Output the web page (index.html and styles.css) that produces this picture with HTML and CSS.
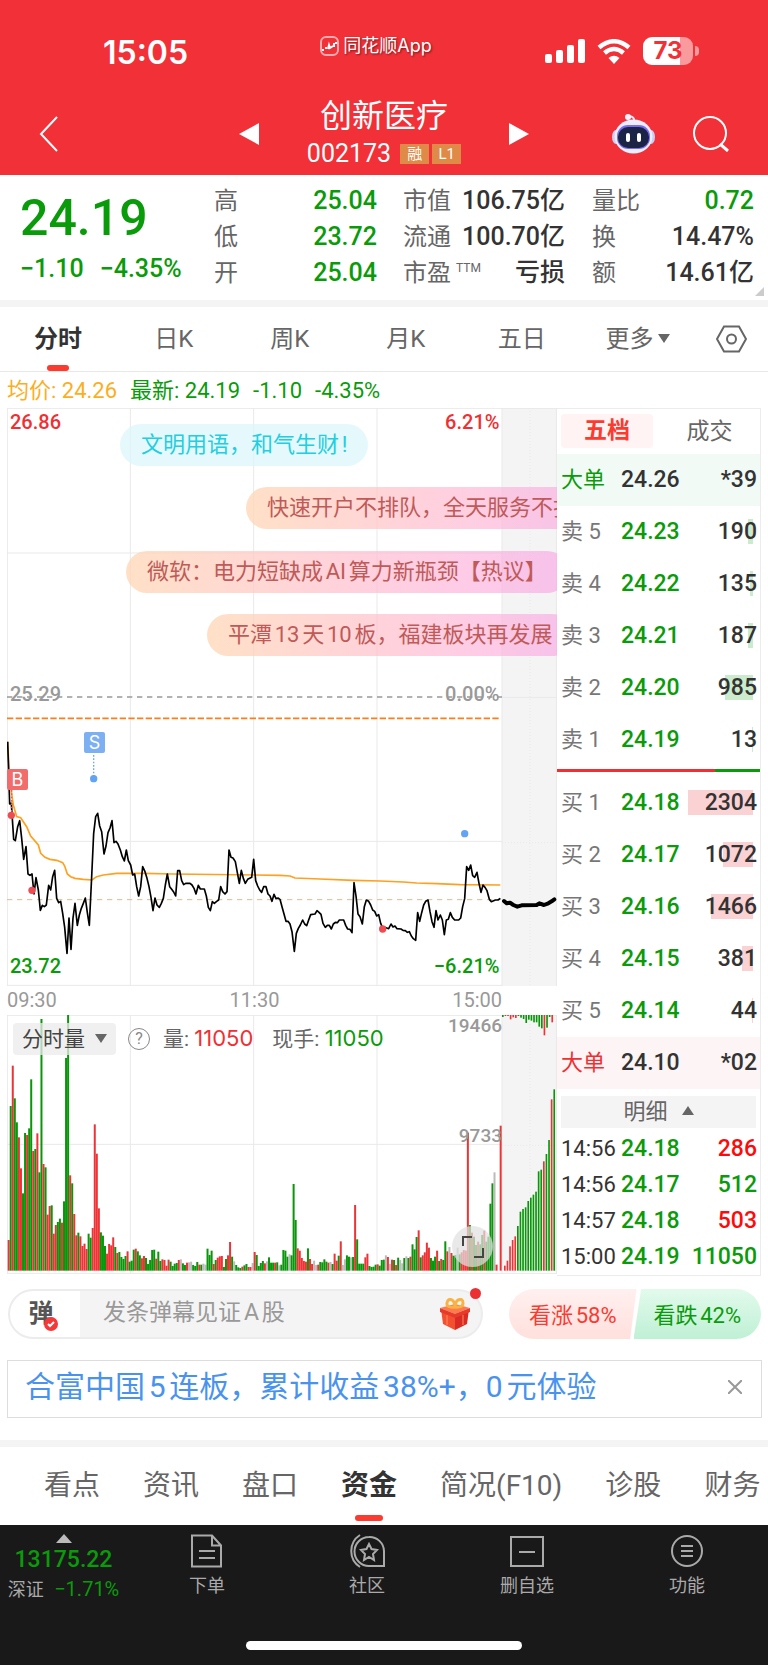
FILE: index.html
```
<!DOCTYPE html>
<html lang="zh-CN">
<head>
  <meta charset="UTF-8">
  <meta name="viewport" content="width=device-width, initial-scale=1.0">
  <title>创新医疗 002173</title>
  <link rel="stylesheet" href="styles.css">
</head>
<body>
  <header>
    <div class="status">
      <span class="clock">15:05</span>
      <span class="app-name">
        <svg width="19" height="20" viewBox="0 0 19 20"><rect x="1" y="1" width="17" height="18" rx="5" fill="none" stroke="#fff" stroke-opacity=".6" stroke-width="2"/><path d="M2 14h2M5 12h2M8 13l1-4 1 3 3-2M14 7v4M16 6v2" fill="none" stroke="#fff" stroke-width="2"/></svg>
        同花顺App
      </span>
      <span class="signals">
        <svg width="40" height="24" viewBox="0 0 40 24" fill="#fff"><rect y="15" width="7" height="9" rx="2"/><rect x="11" y="11" width="7" height="13" rx="2"/><rect x="22" y="6" width="7" height="18" rx="2"/><rect x="33" width="7" height="24" rx="2"/></svg>
        <svg width="34" height="25" viewBox="0 0 34 25"><path d="M2 8.500Q17-4 32 8.500M7.500 14Q17 6 26.500 14" fill="none" stroke="#fff" stroke-width="4.500"/><path d="M11.500 19Q17 14.500 22.500 19L17 25z" fill="#fff"/></svg>
        <span class="battery">73</span>
      </span>
    </div>
    <div class="title-bar">
      <button class="icon-btn back" aria-label="返回"><svg width="20" height="36" viewBox="0 0 20 36"><path d="M18 1L2 18l16 17" fill="none" stroke="#fff" stroke-width="2"/></svg></button>
      <div class="stock">
        <button class="icon-btn" aria-label="上一只"><svg width="20" height="22" viewBox="0 0 20 22"><path d="M20 0v22L0 11z" fill="#fff"/></svg></button>
        <div class="stock-name">
          <h1>创新医疗</h1>
          <div class="code">002173 <span class="badge">融</span><span class="badge">L1</span></div>
        </div>
        <button class="icon-btn" aria-label="下一只"><svg width="20" height="22" viewBox="0 0 20 22"><path d="M0 0v22l20-11z" fill="#fff"/></svg></button>
      </div>
      <div class="actions">
        <button class="icon-btn" aria-label="智能助手">
          <svg width="43" height="40" viewBox="0 0 43 40">
            <path d="M22 7q1-4-5-5" fill="none" stroke="#e4e6fb" stroke-width="2"/><circle cx="16" cy="3" r="3" fill="#f3f3ff"/>
            <ellipse cx="4" cy="23" rx="4" ry="7" fill="#c9cef2"/><ellipse cx="39" cy="23" rx="4" ry="7" fill="#c9cef2"/>
            <ellipse cx="21.500" cy="22.500" rx="19" ry="17" fill="#eceefd"/>
            <rect x="5" y="11" width="33" height="24" rx="11" fill="#7c6df0"/>
            <rect x="6" y="13" width="31" height="21" rx="10" fill="#1b2444"/>
            <rect x="14" y="19" width="4" height="9" rx="2" fill="#fff"/><rect x="25" y="19" width="4" height="9" rx="2" fill="#fff"/>
          </svg>
        </button>
        <button class="icon-btn" aria-label="搜索"><svg width="36" height="36" viewBox="0 0 36 36" fill="none" stroke="#fff" stroke-width="2"><circle cx="17" cy="17" r="16"/><path d="M27 28l8 7" stroke-width="3"/></svg></button>
      </div>
    </div>
  </header>

  <section class="quote">
    <div class="price-now">
      <strong>24.19</strong>
      <div><span>−1.10</span><span>−4.35%</span></div>
    </div>
    <dl class="col-a">
      <div><dt>高</dt><dd class="green">25.04</dd></div>
      <div><dt>低</dt><dd class="green">23.72</dd></div>
      <div><dt>开</dt><dd class="green">25.04</dd></div>
    </dl>
    <dl class="col-b">
      <div><dt>市值</dt><dd>106.75亿</dd></div>
      <div><dt>流通</dt><dd>100.70亿</dd></div>
      <div><dt>市盈<sup>TTM</sup></dt><dd>亏损</dd></div>
    </dl>
    <dl class="col-c">
      <div><dt>量比</dt><dd class="green">0.72</dd></div>
      <div><dt>换</dt><dd>14.47%</dd></div>
      <div><dt>额</dt><dd>14.61亿</dd></div>
    </dl>
    <i class="corner"></i>
  </section>

  <nav class="period">
    <a href="#" class="active">分时</a>
    <a href="#">日K</a>
    <a href="#">周K</a>
    <a href="#">月K</a>
    <a href="#">五日</a>
    <a href="#">更多<i class="down"></i></a>
    <button class="icon-btn" aria-label="设置"><svg width="31" height="28" viewBox="0 0 31 28" fill="none" stroke="#666" stroke-width="2"><path d="M8 1.500h15L30 14l-7 12.500H8L1 14z"/><circle cx="15.500" cy="14" r="4.500"/></svg></button>
  </nav>

  <p class="latest"><span class="avg">均价: 24.26</span><span>最新: 24.19</span><span>-1.10</span><span>-4.35%</span></p>

  <main class="market">
    <div class="charts">
      <div class="price-chart">
        <svg class="plot" viewBox="0 0 1650 1734" preserveAspectRatio="none">
          <rect x="1485" y="0" width="165" height="1734" fill="#f4f4f4"/>
          <path class="grid" d="M1 0V1734M370 0V1734M740 0V1734M1110 0V1734M1485 0V1734M1648 0V1734M0 1H1650M0 435H1485M0 1300H1485M0 1732H1485M1485 868H1650"/>
          <path class="grid dotted" d="M1569 0V1734M1485 435H1650M1485 1304H1650"/>
          <path d="M0 867H1485" stroke="#999" stroke-width="4" stroke-dasharray="16 14"/>
          <path d="M0 931H1480" stroke="#ff7d1a" stroke-width="5" stroke-dasharray="19 7"/>
          <path d="M0 1475H1480" stroke="#e0bb90" stroke-width="3" stroke-dasharray="16 14"/>
          <g transform="translate(-21 846)">
            <polyline class="avg-line" points="23,155 29,270 40,345 50,380 62,383 80,410 92,438 115,465 122,490 135,502 150,508 170,511 188,518 194,528 202,552 212,560 225,565 250,568 276,570 290,560 310,555 350,550 430,550 520,552 840,556"/>
            <polyline class="price-line" points="23,155 29,342 34,340 41,448 46,452 53,410 59,392 65,445 71,508 78,470 84,552 90,556 96,552 102,612 108,563 115,600 121,661 127,646 133,650 139,645 146,586 152,600 158,560 164,541 170,625 176,638 182,634 188,670 194,712 201,790 207,684 213,778 219,684 225,640 232,706 238,675 244,655 250,640 256,624 262,668 268,706 275,560 281,430 287,380 293,370 299,408 305,425 312,492 318,468 324,428 330,414 336,392 342,458 348,454 354,462 361,480 367,500 373,513 379,480 385,512 392,525 398,555 404,552 410,590 416,618 422,590 428,530 435,545 441,565 447,590 453,622 459,662 465,624 471,645 478,652 484,640 490,625 496,585 502,552 509,590 515,598 521,606 527,618 533,542 539,542 545,572 551,584 557,580 570,580 576,585 582,595 588,612 595,586 601,597 613,597 619,618 625,652 631,662 637,635 643,640 650,634 656,630 662,590 668,605 675,612 681,605 687,480 693,502 699,504 706,515 712,548 718,580 724,541 730,565 736,580 743,568 755,562 761,508 767,572 773,588 779,600 785,607 791,590 798,590 804,612 810,618 816,634 822,613 828,626 834,624 840,628"/>
            <path d="M281 195V266" stroke="#6fa8f2" stroke-width="4" stroke-dasharray="5 5"/>
            <path d="M35 300V376" stroke="#f05a5a" stroke-width="4" stroke-dasharray="5 5"/>
            <circle cx="281" cy="266" r="11" fill="#62a3f3"/>
            <circle cx="34" cy="376" r="11" fill="#ee4b52"/>
            <circle cx="96" cy="601" r="11" fill="#ee4b52"/>
          </g>
          <g transform="translate(789 846)">
            <polyline class="avg-line" points="30,556 60,558 75,564 150,567 250,571 330,573 400,576 440,579 500,581 570,584 691,585"/>
            <polyline class="price-line" points="30,628 36,650 42,672 48,694 54,694 60,702 66,725 73,784 79,730 85,715 91,705 98,690 104,702 110,707 116,690 122,674 135,672 141,662 147,667 153,673 159,700 166,712 172,706 178,706 184,717 190,702 196,697 202,698 208,690 221,690 227,706 233,717 240,718 246,728 252,578 258,618 264,672 270,680 277,702 283,650 289,630 296,634 302,645 308,660 314,664 320,678 326,674 332,700 338,714 344,712 356,716 363,702 369,711 375,708 381,716 393,717 399,721 406,722 412,727 418,725 424,738 430,746 437,751 443,668 449,694 455,668 461,645 467,634 474,630 480,665 486,695 492,712 498,662 504,690 511,675 517,690 523,734 529,690 535,688 541,668 547,682 554,690 566,690 572,684 578,650 584,626 590,530 596,541 602,525 608,557 614,562 621,547 627,580 633,607 639,585 645,592 651,602 658,628 664,635 676,630 684,630 691,625"/>
            <polyline class="price-line auction" points="702,633 710,640 720,638 730,645 742,650 755,646 800,645 808,640 822,645 835,640 845,634 853,628"/>
            <circle cx="338" cy="717" r="11" fill="#ee4b52"/>
            <circle cx="584" cy="431" r="11" fill="#62a3f3"/>
          </g>
        </svg>
        <span class="mark sell">S</span>
        <span class="mark buy">B</span>
        <div class="axis top red"><span>26.86</span><span>6.21%</span></div>
        <div class="axis middle"><span>25.29</span><span>0.00%</span></div>
        <div class="axis bottom green"><span>23.72</span><span>−6.21%</span></div>
        <span class="bullet b1">文明用语，和气生财!</span>
        <span class="bullet b2">快速开户不排队，全天服务不打</span>
        <span class="bullet b3">微软：电力短缺成AI算力新瓶颈【热议】</span>
        <span class="bullet b4">平潭13天10板，福建板块再发展</span>
      </div>
      <div class="times"><span>09:30</span><span>11:30</span><span>15:00</span></div>
      <div class="volume-chart">
        <svg class="plot" viewBox="0 0 1650 777" preserveAspectRatio="none">
          <rect x="1485" y="0" width="165" height="768" fill="#f4f4f4"/>
          <path class="grid" d="M1 0V777M370 0V777M740 0V777M1110 0V777M1485 0V777M1648 0V777M0 1H1650M0 388H1485M0 775H1650"/>
          <path class="grid dotted" d="M1569 0V766M1485 391H1650"/>
          <g id="volume"></g>
          <g id="auction"></g>
        </svg>
        <div class="volume-head">
          <button class="picker">分时量<i class="down"></i></button>
          <button class="help" aria-label="说明">?</button>
          <span>量: <b class="red">11050</b></span>
          <span>现手: <b class="green">11050</b></span>
        </div>
        <span class="scale max">19466</span>
        <span class="scale half">9733</span>
        <button class="expand" aria-label="放大"><svg width="22" height="22" viewBox="0 0 22 22" fill="none" stroke="#444" stroke-width="2"><path d="M1 10V1h9M21 12v9h-9"/></svg></button>
      </div>
    </div>

    <aside class="book">
      <div class="book-tabs"><button class="active">五档</button><button>成交</button></div>
      <table>
        <tr class="big-sell"><th>大单</th><td>24.26</td><td>*39</td></tr>
        <tr><th>卖 5</th><td class="green">24.23</td><td><i class="bar" style="width:5px"></i>190</td></tr>
        <tr><th>卖 4</th><td class="green">24.22</td><td><i class="bar" style="width:3px"></i>135</td></tr>
        <tr><th>卖 3</th><td class="green">24.21</td><td><i class="bar" style="width:5px"></i>187</td></tr>
        <tr><th>卖 2</th><td class="green">24.20</td><td><i class="bar" style="width:28px"></i>985</td></tr>
        <tr><th>卖 1</th><td class="green">24.19</td><td><i class="bar" style="width:1px"></i>13</td></tr>
      </table>
      <div class="ratio"><i style="width:78%"></i></div>
      <table class="bids">
        <tr><th>买 1</th><td class="green">24.18</td><td><i class="bar" style="width:65px"></i>2304</td></tr>
        <tr><th>买 2</th><td class="green">24.17</td><td><i class="bar" style="width:30px"></i>1072</td></tr>
        <tr><th>买 3</th><td class="green">24.16</td><td><i class="bar" style="width:42px"></i>1466</td></tr>
        <tr><th>买 4</th><td class="green">24.15</td><td><i class="bar" style="width:11px"></i>381</td></tr>
        <tr><th>买 5</th><td class="green">24.14</td><td><i class="bar" style="width:1px"></i>44</td></tr>
        <tr class="big-buy"><th>大单</th><td>24.10</td><td>*02</td></tr>
      </table>
      <button class="detail">明细<i class="up"></i></button>
      <table class="ticks">
        <tr><th>14:56</th><td class="green">24.18</td><td class="up-tick">286</td></tr>
        <tr><th>14:56</th><td class="green">24.17</td><td class="green">512</td></tr>
        <tr><th>14:57</th><td class="green">24.18</td><td class="up-tick">503</td></tr>
        <tr><th>15:00</th><td class="green">24.19</td><td class="green">11050</td></tr>
      </table>
    </aside>
  </main>

  <section class="talk">
    <div class="send">
      <button class="toggle" aria-label="弹幕开关">弹<svg width="14" height="14" viewBox="0 0 14 14"><circle cx="7" cy="7" r="7" fill="#f5383a"/><path d="M4 7l2 2 4-4" fill="none" stroke="#fff" stroke-width="2"/></svg></button>
      <input type="text" aria-label="发条弹幕" placeholder="发条弹幕见证A股">
      <button class="icon-btn gift" aria-label="礼物">
        <svg width="30" height="32" viewBox="0 0 30 32">
          <path d="M1 11l14 5v16L3 26z" fill="#f2502f"/><path d="M29 11l-14 5v16l12-6z" fill="#d92a24"/>
          <path d="M0 10l15-4 15 4-15 6z" fill="#ff7a4e"/><path d="M0 10l15 6 15-6v4l-15 6L0 14z" fill="#e63b2a"/>
          <path d="M15 9q-9 1-8-4t5-3q3 2 3 7q0-5 3-7q5-2 5 3t-8 4z" fill="none" stroke="#f8b343" stroke-width="3"/>
          <path d="M7 17v10M23 17v10" stroke="#ff8b5e" stroke-width="1"/>
        </svg>
      </button>
      <i class="dot"></i>
    </div>
    <div class="vote">
      <button class="rise">看涨58%</button>
      <button class="fall">看跌42%</button>
    </div>
  </section>

  <div class="promo">
    <a href="#">合富中国5连板，累计收益38%+，0元体验</a>
    <button class="icon-btn" aria-label="关闭"><svg width="14" height="14" viewBox="0 0 14 14"><path d="M0 0l14 14M14 0L0 14" stroke="#999" stroke-width="2"/></svg></button>
  </div>

  <nav class="sections">
    <a href="#">看点</a>
    <a href="#">资讯</a>
    <a href="#">盘口</a>
    <a href="#" class="active">资金</a>
    <a href="#">简况(F10)</a>
    <a href="#">诊股</a>
    <a href="#">财务</a>
  </nav>

  <footer>
    <div class="toolbar">
      <a href="#" class="index"><i class="up"></i><b>13175.22</b><span>深证 <em>−1.71%</em></span></a>
      <a href="#"><svg width="34" height="34" viewBox="0 0 34 34"><path d="M2 1.500h20l9 10v21H2zM22 1.500v10h9M9 17h16M9 24h16"/></svg>下单</a>
      <a href="#"><svg width="36" height="34" viewBox="0 0 36 34"><path d="M20 3a14.500 14.500 0 1 0 0 29h15V17A14.500 14.500 0 0 0 20 3zM11 1a19 19 0 0 0 0 32M20 10l2.500 5 5.500 1-4 4 1 6-5-3-5 3 1-6-4-4 5.500-1z"/></svg>社区</a>
      <a href="#"><svg width="34" height="34" viewBox="0 0 34 34"><path d="M1 3h32v29H1zM9 18h16"/></svg>删自选</a>
      <a href="#"><svg width="34" height="34" viewBox="0 0 34 34"><circle cx="17" cy="17" r="15"/><path d="M11 12h12M11 17h12M11 22h12"/></svg>功能</a>
    </div>
    <div class="home"></div>
  </footer>
  <script src="script.js"></script>
</body>
</html>
```
FILE: styles.css
```
* {
  box-sizing: border-box;
}
body {
  font-family: Roboto, 'Noto Sans CJK SC', sans-serif;
  margin: 0;
  background: #fff;
  color: #333;
  text-autospace: no-autospace;
  overflow-x: hidden;
}
button {
  font-family: inherit;
  border: none;
  background: none;
  padding: 0;
  color: inherit;
}
a {
  color: inherit;
  text-decoration: none;
}
svg {
  display: block;
}
.green {
  color: #0a9b0a;
}
.red {
  color: #f12f33;
}
.up, .down {
  display: inline-block;
  border: 6px solid transparent;
}
.down {
  border-top: 9px solid #666;
  border-bottom: none;
}
.up {
  border-bottom: 9px solid #666;
  border-top: none;
}

/* header */
header {
  background: #f23038;
  color: #fff;
  height: 175px;
}
.status {
  height: 93px;
  padding: 12px 69px 0 103px;
  display: grid;
  grid-template-columns: 1fr auto 1fr;
  align-items: center;
}
.clock {
  font-family: Inter, sans-serif;
  font-size: 32px;
  font-weight: 600;
}
.app-name {
  display: flex;
  align-items: center;
  gap: 4px;
  font-size: 18px;
  line-height: 20px;
  padding-bottom: 14px;
  margin-right: 50px;
  text-shadow: 1px 1px 2px rgba(0,0,0,0.5);
  font-family: Inter, 'Noto Sans CJK SC', sans-serif;
}
.signals {
  display: flex;
  justify-content: flex-end;
  align-items: center;
  gap: 12px;
  padding-bottom: 3px;
}
.battery {
  position: relative;
  width: 50px;
  height: 28px;
  border-radius: 9px;
  background: linear-gradient(90deg, #fff 73%, #f99a9d 73%);
  color: #f23038;
  font: 700 24px/28px Inter, sans-serif;
  text-align: center;
  margin-right: 6px;
}
.battery::after {
  content: '';
  position: absolute;
  right: -6px;
  top: 9px;
  width: 4px;
  height: 10px;
  border-radius: 0 4px 4px 0;
  background: #f99a9d;
}
.title-bar {
  height: 82px;
  padding: 0 39px;
  display: grid;
  grid-template-columns: 1fr 290px 1fr;
  align-items: center;
}
.stock {
  display: flex;
  justify-content: space-between;
  align-items: center;
}
.stock-name {
  text-align: center;
}
.stock-name h1 {
  font-size: 32px;
  font-weight: 400;
  line-height: 40px;
  margin: 0;
}
.code {
  display: flex;
  align-items: center;
  gap: 3px;
  font-size: 25px;
  line-height: 36px;
}
.badge {
  width: 29px;
  height: 20px;
  background: #e08a48;
  font-size: 15px;
  line-height: 20px;
}
.code .badge:first-of-type {
  margin-left: 6px;
}
.actions {
  display: flex;
  justify-content: flex-end;
  align-items: center;
  gap: 38px;
}

/* quote */
.quote {
  position: relative;
  height: 125px;
  padding: 8px 14px 0 20px;
  display: flex;
  font-size: 25px;
  font-weight: 500;
}
.price-now {
  width: 194px;
  color: #0a9b0a;
}
.price-now strong {
  display: block;
  font-size: 50px;
  font-weight: 500;
  line-height: 70px;
}
.price-now div {
  display: flex;
  gap: 16px;
  line-height: 32px;
}
.quote dl {
  margin: 0;
}
.quote dl div {
  display: flex;
  justify-content: space-between;
  line-height: 36px;
}
.quote dt {
  font-size: 24px;
  font-weight: 400;
  color: #666;
  white-space: nowrap;
}
.quote dd {
  margin: 0;
  white-space: nowrap;
}
.quote sup {
  font-size: 12px;
  line-height: 12px;
  margin-left: 5px;
}
.col-a {
  width: 163px;
}
.quote .col-b {
  width: 162px;
  margin: 0 27px 0 26px;
}
.col-c {
  flex: 1;
}
.corner {
  position: absolute;
  right: 4px;
  bottom: 4px;
  border-left: 9px solid transparent;
  border-bottom: 9px solid #ccc;
}

/* period tabs */
.period {
  border-top: 7px solid #f4f4f4;
  border-bottom: 1px solid #e8e8e8;
  height: 72px;
  display: grid;
  grid-template-columns: repeat(6, 8fr) 5fr;
  justify-items: center;
  align-items: center;
  font-size: 24px;
  line-height: 64px;
  color: #666;
}
.active {
  position: relative;
  font-weight: 700;
  color: #333;
}
.period .active::after, .sections .active::after {
  content: '';
  position: absolute;
  left: calc(50% - 11px);
  bottom: 0;
  width: 22px;
  height: 6px;
  border-radius: 3px;
  background: #fb3a30;
}
.period .down {
  margin: 0 0 4px 4px;
}
.latest {
  margin: 0;
  padding: 0 7px;
  height: 36px;
  display: flex;
  gap: 13px;
  font-size: 22px;
  line-height: 38px;
  color: #0a9b0a;
}
.latest .avg {
  color: #fcae1e;
}

/* charts */
.market {
  display: flex;
  margin: 0 7px;
}
.charts {
  flex: 1;
  min-width: 0;
}
.plot {
  width: 100%;
  height: 100%;
}
.plot path, .plot polyline {
  fill: none;
}
.grid {
  stroke: #e9e9e9;
  stroke-width: 3;
}
.dotted {
  stroke-dasharray: 3 6;
}
.price-line {
  stroke: #000;
  stroke-width: 5;
  stroke-linejoin: round;
}
.plot .auction {
  stroke-width: 12;
  stroke-linecap: round;
}
.avg-line {
  stroke: #ffa01e;
  stroke-width: 5;
}
.price-chart {
  position: relative;
  height: 578px;
  overflow: hidden;
}
.axis {
  position: absolute;
  left: 3px;
  width: 89%;
  display: flex;
  justify-content: space-between;
  font-size: 20px;
  font-weight: 500;
  line-height: 24px;
}
.axis.top {
  top: 2px;
}
.axis.middle {
  top: 274px;
  color: #999;
}
.axis.bottom {
  bottom: 8px;
}
.mark {
  position: absolute;
  width: 21px;
  height: 21px;
  border-radius: 2px;
  color: #fff;
  font: 18px/21px Inter, sans-serif;
  text-align: center;
}
.sell {
  left: 14%;
  top: 324px;
  background: #7db0f3;
}
.buy {
  left: 0;
  top: 361px;
  background: #f26c6c;
}
.bullet {
  position: absolute;
  height: 42px;
  padding: 0 21px;
  border-radius: 21px;
  font-size: 22px;
  line-height: 42px;
  white-space: nowrap;
  text-autospace: normal;
  color: #bf5a58;
  background: linear-gradient(90deg, rgba(255,214,180,0.75), rgba(255,190,205,0.7), rgba(250,160,230,0.6));
}
.b1 {
  left: 113px;
  top: 16px;
  color: #22cfe0;
  background: rgba(220,246,250,0.75);
}
.b2 {
  left: 239px;
  top: 79px;
}
.b3 {
  left: 119px;
  top: 143px;
}
.b4 {
  left: 200px;
  top: 206px;
}
.times {
  display: flex;
  justify-content: space-between;
  width: 90%;
  height: 29px;
  font-size: 20px;
  line-height: 28px;
  color: #999;
}
.volume-chart {
  position: relative;
  height: 259px;
}
.volume-head {
  position: absolute;
  left: 6px;
  top: 7px;
  display: flex;
  align-items: center;
  font-size: 21px;
  line-height: 32px;
  color: #666;
}
.volume-head b {
  font-weight: 400;
  font-size: 22px;
  font-family: Inter, sans-serif;
}
.volume-head span {
  margin-right: 19px;
}
.picker {
  width: 103px;
  height: 32px;
  border-radius: 4px;
  background: rgba(235,235,235,0.75);
  font-size: 21px;
  line-height: 30px;
  color: #444;
}
.picker .down {
  margin: 0 0 3px 10px;
}
.help {
  width: 22px;
  height: 22px;
  border: 1px solid #888;
  border-radius: 50%;
  margin: 0 13px 0 12px;
  font-size: 16px;
  line-height: 20px;
  color: #888;
}
.scale {
  position: absolute;
  right: 10%;
  font-size: 19px;
  font-weight: 500;
  line-height: 24px;
  color: #999;
}
.max {
  top: -1px;
}
.half {
  top: 109px;
}
.expand {
  position: absolute;
  right: 64px;
  bottom: 7px;
  width: 41px;
  height: 41px;
  border-radius: 50%;
  background: rgba(225,225,225,0.72);
  display: flex;
  align-items: center;
  justify-content: center;
}

/* order book */
.book {
  width: 204px;
  border: 1px solid #ececec;
  border-left: none;
}
.book-tabs {
  height: 45px;
  padding: 5px 4px;
  display: grid;
  grid-template-columns: 92px 1fr;
}
.book-tabs button {
  font-size: 23px;
  line-height: 34px;
  color: #666;
  padding-left: 10px;
}
.book-tabs .active {
  height: 34px;
  border-radius: 4px;
  background: #fff3f3;
  color: #fb3a30;
  padding: 0;
}
.book table {
  width: 100%;
  table-layout: fixed;
  border-collapse: collapse;
}
.book tr {
  height: 52px;
}
.book th, .book td {
  padding: 0;
  font-size: 23px;
  font-weight: 500;
  line-height: 32px;
  text-align: left;
}
.book th {
  width: 64px;
  padding-left: 4px;
  font-size: 22px;
  font-weight: 400;
  color: #777;
  white-space: nowrap;
}
.book td:last-child {
  position: relative;
  text-align: right;
  padding-right: 3px;
}
.bar {
  position: absolute;
  z-index: -1;
  right: 7px;
  top: 13px;
  height: 25px;
  background: #cbebcc;
}
.bids .bar {
  background: #fbd2d4;
}
.big-sell {
  background: #f1faf5;
}
.book .big-sell th {
  color: #0a9b0a;
}
.big-buy {
  background: #fdf5f5;
}
.book .big-buy th {
  color: #f12f33;
}
.ratio {
  height: 3px;
  margin: 3px 0 5px;
  background: #0a9b0a;
}
.ratio i {
  display: block;
  height: 3px;
  background: #f12f33;
}
.detail {
  display: block;
  width: calc(100% - 8px);
  height: 32px;
  margin: 7px 4px 3px;
  background: #f4f4f4;
  font-size: 22px;
  line-height: 32px;
  color: #666;
}
.detail .up {
  margin: 0 0 4px 14px;
}
.book .ticks tr {
  height: 36px;
}
.book .ticks th {
  font-size: 22px;
  color: #333;
}
.book .up-tick {
  color: #ff0a0a;
}

/* bullet comment input and vote */
.talk {
  display: flex;
  gap: 26px;
  padding: 13px 7px 0 8px;
}
.send {
  position: relative;
  flex: 1;
  height: 50px;
  display: flex;
  align-items: center;
  border: 2px solid #ececec;
  border-radius: 25px;
  background: linear-gradient(90deg, #fff 70px, #f4f4f4 70px);
}
.toggle {
  position: relative;
  width: 70px;
  padding-right: 8px;
  font-size: 25px;
  line-height: 34px;
  font-weight: 700;
  color: #555;
}
.toggle svg {
  position: absolute;
  right: 22px;
  bottom: 0;
}
.send input {
  flex: 1;
  min-width: 0;
  border: none;
  background: none;
  padding: 0 0 3px 23px;
  font-family: inherit;
  font-size: 23px;
  text-autospace: normal;
}
.send input::placeholder {
  color: #999;
}
.gift {
  margin-right: 11px;
}
.dot {
  position: absolute;
  right: 0;
  top: -3px;
  width: 11px;
  height: 11px;
  border-radius: 50%;
  background: #ec2f33;
}
.vote {
  display: flex;
  width: 252px;
}
.vote button {
  flex: 1;
  height: 50px;
  padding-bottom: 3px;
  font-size: 22px;
  text-autospace: normal;
}
.vote .rise {
  color: #fb3a30;
  border-radius: 25px 0 0 25px;
  background: linear-gradient(#fff0ef, #ffe0dd);
  clip-path: polygon(0 0, 100% 0, 95% 100%, 0 100%);
}
.vote .fall {
  color: #0a9b0a;
  border-radius: 0 25px 25px 0;
  margin-left: -3px;
  background: linear-gradient(#e2faec, #bff0d5);
  clip-path: polygon(6% 0, 100% 0, 100% 100%, 0 100%);
}
.promo {
  display: flex;
  justify-content: space-between;
  align-items: center;
  height: 58px;
  margin: 21px 6px 22px 7px;
  padding: 0 19px 4px 17px;
  border: 1px solid #ddd;
  font-size: 29px;
  text-autospace: normal;
  color: #4993ee;
}
.promo a {
  font-size: 30px;
  line-height: 40px;
}

/* bottom */
.sections {
  border-top: 7px solid #f4f4f4;
  height: 85px;
  padding-left: 44px;
  display: flex;
  gap: 43px;
  overflow: hidden;
  font-size: 28px;
  line-height: 78px;
  color: #666;
  white-space: nowrap;
}
.sections .active::after {
  left: calc(50% - 14px);
  bottom: 4px;
  width: 28px;
}
footer {
  height: 140px;
  background: #191919;
  color: #aaa;
}
.toolbar {
  display: grid;
  grid-template-columns: 127px repeat(4, 1fr);
  height: 116px;
  padding: 9px 1px 0 0;
  font-size: 18px;
  line-height: 24px;
}
.toolbar a {
  display: flex;
  flex-direction: column;
  align-items: center;
  gap: 6px;
}
.toolbar svg {
  fill: none;
  stroke: #aaa;
  stroke-width: 2;
}
.toolbar .index {
  gap: 3px;
}
.index .up {
  border-width: 0 8px 9px;
  border-bottom-color: #bbb;
}
.index b {
  font-size: 23px;
  font-weight: 500;
  line-height: 28px;
  color: #0a9b0a;
}
.index em {
  font-style: normal;
  font-size: 20px;
  color: #0a9b0a;
  margin-left: 6px;
}
.home {
  width: 36%;
  height: 9px;
  border-radius: 5px;
  margin: 0 auto;
  background: #fff;
}
```
FILE: script.js
```
const colors = { r: '#ee3337', g: '#0a960a', a: '#bbb' };

// one entry per minute: direction + height
const volume = `r92 g494 r615 g517 g445 r400 r307 g232 g413 r407 g427 g574 r359 g365 r412 g295 g755 r320 g310 r168
r194 g196 r111 r137 g146 g156 r144 g208 g638 g767 r286 g262 r170 r106 g114 r103 r74 r81 r65 g111
g99 r128 r439 r351 r187 g115 g105 g74 r51 r80 r76 r100 g71 r53 g56 g41 g35 g44 r58 g27
g30 g63 r66 g58 g46 r37 r44 g38 g20 g32 g62 g63 r36 g57 g29 r34 r32 r15 r33 g27
g14 g21 g23 r32 a34 g22 g17 r24 a25 a27 g17 g14 g26 r18 g18 a21 a18 g66 g47 g60
r20 g32 r39 r43 r44 g11 g35 r46 r86 g42 a28 g17 g10 g8 r12 g16 g20 r11 r11 a23
r56 g47 g14 g23 g29 r22 a28 g40 g24 g24 r24 g25 a16 g18 g62 g60 g42 a49 g46 g260
g152 r67 r60 r38 r29 r27 g67 r35 r20 a30 a17 r18 g26 g25 g34 g27 r24 a26 g20 r51
r30 g45 r88 a17 a34 g46 g42 a40 g41 r197 g94 g21 g21 g21 r40 r51 g14 g11 g12 g18
r19 g15 g32 g33 a46 r41 a20 r33 g32 r17 g39 a32 a22 g38 a43 g38 r42 g79 g64 g101
r121 g40 r46 r55 r84 r69 g38 g30 g42 r60 g29 r35 g32 g88 r58 a71 r53 g45 g47 a69
g49 r55 r62 r60 r414 g137 r114 g102 g77 r87 g79 g107 r120 g87 g102 g201 g262 a295 r18 a0 r435`.split(/\s+/);

const auctionVolume = 'r15 r30 r73 r92 r103 g134 g177 g185 g190 g209 g219 g228 g237 g298 g303 r328 g350 g392 r514 g544'.split(' ');
const auctionTop = 'g6 r3 r3 r13 r7 r9 g3 g8 g12 g24 g14 g17 g22 g22 g35 g40 r61 g38 g6 r22'.split(' ');

function drawBars(id, data, start, step, width, fromTop) {
  const group = document.getElementById(id);
  data.forEach((item, i) => {
    const height = Number(item.slice(1));
    const rect = document.createElementNS('http://www.w3.org/2000/svg', 'rect');
    rect.setAttribute('x', start + i * step);
    rect.setAttribute('y', fromTop ? 0 : 767 - height);
    rect.setAttribute('width', width);
    rect.setAttribute('height', height);
    rect.setAttribute('fill', colors[item[0]]);
    group.appendChild(rect);
  });
}

drawBars('volume', volume, 2, 6.15, 6, false);
drawBars('auction', auctionVolume, 1491, 7.8, 5, false);
drawBars('auction', auctionTop, 1485, 7.8, 5, true);
```
